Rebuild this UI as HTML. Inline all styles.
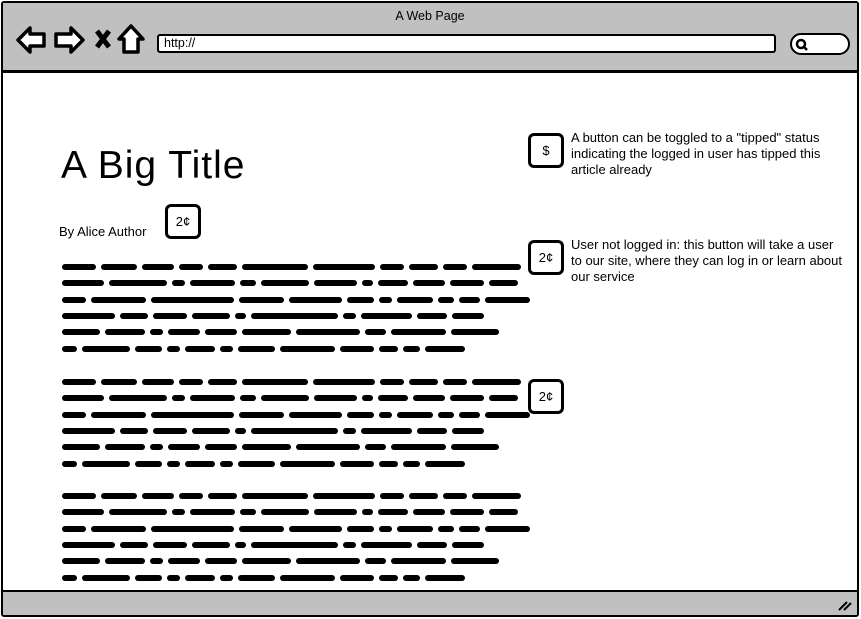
<!DOCTYPE html>
<html><head><meta charset="utf-8"><style>
*{margin:0;padding:0;box-sizing:border-box}
body{width:861px;height:619px;background:#fff;font-family:"Liberation Sans",sans-serif;position:relative;overflow:hidden}
.frame{position:absolute;left:1px;top:1px;width:858px;height:616px;border:2px solid #000;border-radius:3px;background:#fff}
.top{position:absolute;left:0;top:0;width:100%;height:70px;background:#c0c0c0;border-bottom:3px solid #000}
.bot{position:absolute;left:0;bottom:0;width:100%;height:25px;background:#c0c0c0;border-top:2px solid #000}
.title{position:absolute;left:0;width:100%;top:6px;text-align:center;font-size:12.5px}
.url{position:absolute;left:154px;top:31px;width:619px;height:19px;background:#fff;border:2px solid #000;border-radius:3px;font-size:12.5px;padding-left:5px;line-height:15px}
.search{position:absolute;left:787px;top:30px;width:60px;height:22px;background:#fff;border:2px solid #000;border-radius:11px}
.btn{position:absolute;width:36px;height:35px;border:3px solid #000;border-radius:6px;background:#fff;font-size:13px;text-align:center;line-height:29px}
.t{position:absolute;font-size:13px;line-height:16px;color:#000}
.sc{position:absolute;left:59px}
.sc div{height:16.3px;display:flex;gap:5px;align-items:center}
.sc span{display:inline-block;height:6px;background:#000;border-radius:3px}
</style></head><body>
<div class="frame">
<div class="top">
<div class="title">A Web Page</div>
<svg width="150" height="40" style="position:absolute;left:12px;top:20px" fill="#fff" stroke="#000" stroke-width="3.5" stroke-linejoin="round">
<path d="M3 17 L15 5 L15 11 L29 11 L29 23 L15 23 L15 29 Z"/>
<path d="M68 17 L56 5 L56 11 L41 11 L41 23 L56 23 L56 29 Z"/>
<path d="M82 8 L94 24 M94 8 L82 24" stroke-width="5"/>
<path d="M116 3 L104 16 L109 16 L109 29 L123 29 L123 16 L128 16 Z"/>
</svg>
<div class="url">http://</div>
<div class="search"><svg width="16" height="14" style="position:absolute;left:3px;top:3px"><circle cx="6" cy="6" r="4" fill="none" stroke="#000" stroke-width="2.5"/><path d="M9 9 L12 12" stroke="#000" stroke-width="2.5"/></svg></div>
</div>
<div class="bot"><svg width="16" height="14" style="position:absolute;right:4px;top:6px"><path d="M2 12 L10 4 M7 12 L14 5" stroke="#000" stroke-width="2"/></svg></div>
<div class="t" style="left:58px;top:141px;font-size:39px;line-height:44px;letter-spacing:1px">A Big Title</div>
<div class="t" style="left:56px;top:221px;font-size:13px">By Alice Author</div>
<div class="btn" style="left:162px;top:201px">2¢</div>
<div class="btn" style="left:525px;top:130px">$</div>
<div class="btn" style="left:525px;top:237px">2¢</div>
<div class="btn" style="left:525px;top:376px">2¢</div>
<div class="t" style="left:568px;top:127px;width:268px">A button can be toggled to a "tipped" status indicating the logged in user has tipped this article already</div>
<div class="t" style="left:568px;top:234px;width:275px">User not logged in: this button will take a user to our site, where they can log in or learn about our service</div>
<div class="sc" style="top:256px">
<div><span style="width:34px"></span><span style="width:36px"></span><span style="width:32px"></span><span style="width:24px"></span><span style="width:29px"></span><span style="width:66px"></span><span style="width:62px"></span><span style="width:24px"></span><span style="width:29px"></span><span style="width:24px"></span><span style="width:49px"></span></div>
<div><span style="width:42px"></span><span style="width:58px"></span><span style="width:13px"></span><span style="width:45px"></span><span style="width:16px"></span><span style="width:48px"></span><span style="width:43px"></span><span style="width:11px"></span><span style="width:30px"></span><span style="width:32px"></span><span style="width:34px"></span><span style="width:29px"></span></div>
<div><span style="width:24px"></span><span style="width:55px"></span><span style="width:83px"></span><span style="width:45px"></span><span style="width:53px"></span><span style="width:27px"></span><span style="width:13px"></span><span style="width:36px"></span><span style="width:16px"></span><span style="width:21px"></span><span style="width:45px"></span></div>
<div><span style="width:53px"></span><span style="width:28px"></span><span style="width:34px"></span><span style="width:38px"></span><span style="width:11px"></span><span style="width:87px"></span><span style="width:13px"></span><span style="width:51px"></span><span style="width:30px"></span><span style="width:32px"></span></div>
<div><span style="width:38px"></span><span style="width:40px"></span><span style="width:13px"></span><span style="width:32px"></span><span style="width:32px"></span><span style="width:49px"></span><span style="width:64px"></span><span style="width:21px"></span><span style="width:55px"></span><span style="width:48px"></span></div>
<div><span style="width:15px"></span><span style="width:48px"></span><span style="width:27px"></span><span style="width:13px"></span><span style="width:30px"></span><span style="width:13px"></span><span style="width:37px"></span><span style="width:55px"></span><span style="width:34px"></span><span style="width:19px"></span><span style="width:17px"></span><span style="width:40px"></span></div>
</div>
<div class="sc" style="top:371px">
<div><span style="width:34px"></span><span style="width:36px"></span><span style="width:32px"></span><span style="width:24px"></span><span style="width:29px"></span><span style="width:66px"></span><span style="width:62px"></span><span style="width:24px"></span><span style="width:29px"></span><span style="width:24px"></span><span style="width:49px"></span></div>
<div><span style="width:42px"></span><span style="width:58px"></span><span style="width:13px"></span><span style="width:45px"></span><span style="width:16px"></span><span style="width:48px"></span><span style="width:43px"></span><span style="width:11px"></span><span style="width:30px"></span><span style="width:32px"></span><span style="width:34px"></span><span style="width:29px"></span></div>
<div><span style="width:24px"></span><span style="width:55px"></span><span style="width:83px"></span><span style="width:45px"></span><span style="width:53px"></span><span style="width:27px"></span><span style="width:13px"></span><span style="width:36px"></span><span style="width:16px"></span><span style="width:21px"></span><span style="width:45px"></span></div>
<div><span style="width:53px"></span><span style="width:28px"></span><span style="width:34px"></span><span style="width:38px"></span><span style="width:11px"></span><span style="width:87px"></span><span style="width:13px"></span><span style="width:51px"></span><span style="width:30px"></span><span style="width:32px"></span></div>
<div><span style="width:38px"></span><span style="width:40px"></span><span style="width:13px"></span><span style="width:32px"></span><span style="width:32px"></span><span style="width:49px"></span><span style="width:64px"></span><span style="width:21px"></span><span style="width:55px"></span><span style="width:48px"></span></div>
<div><span style="width:15px"></span><span style="width:48px"></span><span style="width:27px"></span><span style="width:13px"></span><span style="width:30px"></span><span style="width:13px"></span><span style="width:37px"></span><span style="width:55px"></span><span style="width:34px"></span><span style="width:19px"></span><span style="width:17px"></span><span style="width:40px"></span></div>
</div>
<div class="sc" style="top:485px">
<div><span style="width:34px"></span><span style="width:36px"></span><span style="width:32px"></span><span style="width:24px"></span><span style="width:29px"></span><span style="width:66px"></span><span style="width:62px"></span><span style="width:24px"></span><span style="width:29px"></span><span style="width:24px"></span><span style="width:49px"></span></div>
<div><span style="width:42px"></span><span style="width:58px"></span><span style="width:13px"></span><span style="width:45px"></span><span style="width:16px"></span><span style="width:48px"></span><span style="width:43px"></span><span style="width:11px"></span><span style="width:30px"></span><span style="width:32px"></span><span style="width:34px"></span><span style="width:29px"></span></div>
<div><span style="width:24px"></span><span style="width:55px"></span><span style="width:83px"></span><span style="width:45px"></span><span style="width:53px"></span><span style="width:27px"></span><span style="width:13px"></span><span style="width:36px"></span><span style="width:16px"></span><span style="width:21px"></span><span style="width:45px"></span></div>
<div><span style="width:53px"></span><span style="width:28px"></span><span style="width:34px"></span><span style="width:38px"></span><span style="width:11px"></span><span style="width:87px"></span><span style="width:13px"></span><span style="width:51px"></span><span style="width:30px"></span><span style="width:32px"></span></div>
<div><span style="width:38px"></span><span style="width:40px"></span><span style="width:13px"></span><span style="width:32px"></span><span style="width:32px"></span><span style="width:49px"></span><span style="width:64px"></span><span style="width:21px"></span><span style="width:55px"></span><span style="width:48px"></span></div>
<div><span style="width:15px"></span><span style="width:48px"></span><span style="width:27px"></span><span style="width:13px"></span><span style="width:30px"></span><span style="width:13px"></span><span style="width:37px"></span><span style="width:55px"></span><span style="width:34px"></span><span style="width:19px"></span><span style="width:17px"></span><span style="width:40px"></span></div>
</div>
</div>
</body></html>
